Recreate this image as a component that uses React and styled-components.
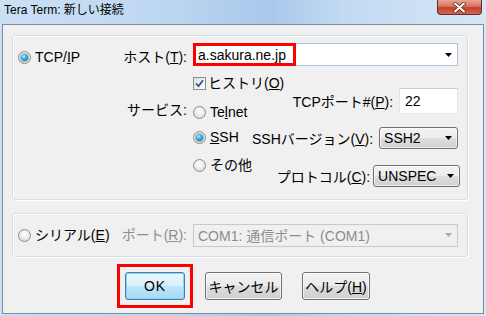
import React from 'react';
import styled, { createGlobalStyle, css } from 'styled-components';

const GlobalStyle = createGlobalStyle`
  html, body { margin: 0; padding: 0; }
  body {
    width: 486px;
    height: 316px;
    overflow: hidden;
    font-family: "Liberation Sans", "Noto Sans CJK JP", sans-serif;
    font-size: 14px;
    color: #000;
  }
`;

const Window = styled.div`
  width: 486px;
  height: 316px;
  box-sizing: border-box;
  display: flex;
  flex-direction: column;
  padding: 0 2px 2px 2px;
  background: linear-gradient(to right, #cbe0f5 0%, #bdd6f0 35%, #a9c8ea 55%, #c3dbf2 72%, #d5e6f7 100%);
`;

const TitleBar = styled.div`
  height: 24px;
  flex: none;
  display: flex;
  justify-content: space-between;
  align-items: flex-start;
  padding-left: 2px;
`;

const TitleText = styled.div`
  font-size: 12px;
  line-height: 20px;
  white-space: nowrap;
`;

const CloseButton = styled.div`
  width: 45px;
  height: 15px;
  margin-right: 2px;
  box-sizing: border-box;
  border: 1px solid #6b2b22;
  border-top: none;
  border-radius: 0 0 4px 4px;
  background: linear-gradient(#e8a596 0%, #d8735f 45%, #c4402c 55%, #d2684f 100%);
  display: grid;
  place-items: center;
`;

const Client = styled.div`
  flex: 1;
  box-sizing: border-box;
  border: 1px solid #7b8ca0;
  background: #f0f0f0;
  padding: 10px 15px 0 9px;
  display: flex;
  flex-direction: column;
`;

const Group = styled.div`
  box-sizing: border-box;
  height: ${(p) => p.$h}px;
  border: 1px solid #d5dfe5;
  border-radius: 3px;
  box-shadow: inset 1px 1px 0 #fff, 1px 1px 0 #fff;
  display: flex;
  align-items: ${(p) => (p.$center ? 'center' : 'flex-start')};
  padding: ${(p) => (p.$center ? '0 0 0 5px' : '7px 0 0 5px')};
  margin-bottom: ${(p) => p.$mb || 0}px;
`;

const LeftCol = styled.div`
  width: 99px;
  flex: none;
  padding-top: ${(p) => p.$pt || 0}px;
`;

const LabelCol = styled.div`
  width: 70px;
  flex: none;
  display: flex;
  flex-direction: column;
  align-items: flex-end;
`;

const Label = styled.div`
  line-height: 16px;
  white-space: nowrap;
  margin-top: ${(p) => p.$mt || 0}px;
  color: ${(p) => (p.$disabled ? '#8d8d8d' : '#000')};
`;

const ControlsCol = styled.div`
  width: 265px;
  flex: none;
  margin-left: 6px;
  display: flex;
  flex-direction: column;
`;

const U = styled.span`
  text-decoration: underline;
`;

const Choice = styled.label`
  display: flex;
  align-items: center;
  gap: ${(p) => p.$gap ?? 4}px;
  height: 16px;
  line-height: 16px;
  white-space: nowrap;
  margin-top: ${(p) => p.$mt || 0}px;
`;

const RadioDot = styled.span`
  width: 13px;
  height: 13px;
  flex: none;
  box-sizing: border-box;
  border-radius: 50%;
  border: 1px solid #8c8c8c;
  background: radial-gradient(circle at 50% 40%, #ffffff 0%, #ececec 50%, #cdcdcd 100%);
  display: grid;
  place-items: center;
  ${(p) =>
    p.$checked &&
    css`
      &::after {
        content: '';
        width: 7px;
        height: 7px;
        border-radius: 50%;
        background: radial-gradient(circle at 40% 35%, #b4f0ff 0%, #2ea8de 45%, #0b5a8c 100%);
        box-shadow: 0 0 0 1px rgba(40, 80, 110, 0.35);
      }
    `}
`;

const CheckBox = styled.span`
  width: 13px;
  height: 13px;
  flex: none;
  box-sizing: border-box;
  border: 1px solid #8e8f8f;
  background: linear-gradient(135deg, #dcdcdc 0%, #f4f4f4 60%, #ffffff 100%);
  display: grid;
  place-items: center;
`;

const Combo = styled.div`
  position: relative;
  width: 265px;
  height: 23px;
  box-sizing: border-box;
  border: 1px solid ${(p) => (p.$disabled ? '#c9c9c9' : '#a8c3de')};
  background: ${(p) => (p.$disabled ? '#f0f0f0' : '#fff')};
  color: ${(p) => (p.$disabled ? '#8d8d8d' : '#000')};
  display: flex;
  align-items: center;
  justify-content: space-between;
  padding: 0 5px 0 4px;
  white-space: nowrap;
`;

const Highlight = styled.span`
  position: absolute;
  left: -1px;
  top: -1px;
  width: 103px;
  height: 23px;
  box-sizing: border-box;
  border: 3px solid #f00;
  pointer-events: none;
`;

const Split = styled.div`
  display: flex;
  align-items: flex-start;
`;

const ServicesCol = styled.div`
  width: 59px;
  flex: none;
  display: flex;
  flex-direction: column;
  margin-top: 9px;
`;

const OptionsCol = styled.div`
  flex: 1;
  display: flex;
  flex-direction: column;
  margin-top: 22px;
`;

const OptionRow = styled.div`
  display: flex;
  align-items: center;
  justify-content: flex-end;
  gap: ${(p) => p.$gap ?? 6}px;
  margin-top: ${(p) => p.$mt || 0}px;
  margin-right: ${(p) => p.$mr || 0}px;
  white-space: nowrap;
`;

const TextBox = styled.div`
  width: 59px;
  height: 26px;
  box-sizing: border-box;
  background: #fff;
  border: 1px solid #e2e5ea;
  border-top-color: #c9ccd3;
  padding: 0 5px;
  line-height: 24px;
`;

const Select = styled.div`
  width: ${(p) => p.$w}px;
  height: 22px;
  box-sizing: border-box;
  border: 1px solid #707070;
  border-radius: 3px;
  background: linear-gradient(#f4f4f4 0%, #ececec 50%, #dedede 51%, #d0d0d0 100%);
  box-shadow: inset 0 0 0 1px rgba(255, 255, 255, 0.6);
  display: flex;
  align-items: center;
  justify-content: space-between;
  padding: 0 5px 0 4px;
`;

const ButtonRow = styled.div`
  display: flex;
  gap: 20px;
  padding-left: 113px;
  margin-top: 15px;
`;

const Button = styled.button`
  position: relative;
  width: ${(p) => p.$w}px;
  height: 28px;
  padding: 0;
  font: inherit;
  font-size: 14px;
  color: #000;
  white-space: nowrap;
  border: 1px solid #707070;
  border-radius: 3px;
  background: linear-gradient(#f3f3f3 0%, #ebebeb 50%, #dddddd 51%, #cfcfcf 100%);
  box-shadow: inset 0 0 0 1px rgba(255, 255, 255, 0.7);
  ${(p) =>
    p.$default &&
    css`
      letter-spacing: 1px;
      border-color: #3c7fb1;
      background: linear-gradient(#eaf6fd 0%, #d9f0fc 50%, #bee6fd 51%, #a7d9f5 100%);
      box-shadow: inset 0 0 0 1px #8fd3f5;
      &::after {
        content: '';
        position: absolute;
        left: -9px;
        top: -9px;
        right: -9px;
        bottom: -9px;
        border: 3px solid #f00;
      }
    `}
`;

const Arrow = ({ color = '#000' }) => (
  <svg width="7" height="4" viewBox="0 0 7 4">
    <polygon points="0,0 7,0 3.5,4" fill={color} />
  </svg>
);

const Radio = ({ checked, children, mt }) => (
  <Choice $mt={mt}>
    <RadioDot $checked={checked} />
    <span>{children}</span>
  </Choice>
);

export default function App() {
  return (
    <>
      <GlobalStyle />
      <Window>
        <TitleBar>
          <TitleText>Tera Term: 新しい接続</TitleText>
          <CloseButton>
            <svg width="13" height="11" viewBox="0 0 13 11">
              <path d="M2 1.5 L11 9.5 M11 1.5 L2 9.5" stroke="#5a2018" strokeWidth="3.4" strokeLinecap="round" />
              <path d="M2 1.5 L11 9.5 M11 1.5 L2 9.5" stroke="#fff" strokeWidth="2" strokeLinecap="round" />
            </svg>
          </CloseButton>
        </TitleBar>

        <Client>
          <Group $h={165} $mb={13}>
            <LeftCol $pt={6}>
              <Radio checked>TCP/<U>I</U>P</Radio>
            </LeftCol>
            <LabelCol>
              <Label $mt={6}>ホスト(<U>T</U>):</Label>
              <Label $mt={37}>サービス:</Label>
            </LabelCol>
            <ControlsCol>
              <Combo>
                <span>a.sakura.ne.jp</span>
                <Arrow />
                <Highlight />
              </Combo>
              <Split>
                <ServicesCol>
                  <Choice $gap={2}>
                    <CheckBox>
                      <svg width="9" height="9" viewBox="0 0 9 9">
                        <path d="M1 4.5 L3.5 7.2 L8 1.2" stroke="#3b4f94" strokeWidth="1.8" fill="none" />
                      </svg>
                    </CheckBox>
                    <span>ヒストリ(<U>O</U>)</span>
                  </Choice>
                  <Radio mt={13}>Te<U>l</U>net</Radio>
                  <Radio checked mt={9}><U>S</U>SH</Radio>
                  <Radio mt={12}>その他</Radio>
                </ServicesCol>
                <OptionsCol>
                  <OptionRow>
                    <span>TCPポート#(<U>P</U>):</span>
                    <TextBox>22</TextBox>
                  </OptionRow>
                  <OptionRow $mt={13}>
                    <span>SSHバージョン(<U>V</U>):</span>
                    <Select $w={79}>
                      <span>SSH2</span>
                      <Arrow />
                    </Select>
                  </OptionRow>
                  <OptionRow $mt={16} $gap={3} $mr={-2}>
                    <span>プロトコル(<U>C</U>):</span>
                    <Select $w={87}>
                      <span>UNSPEC</span>
                      <Arrow />
                    </Select>
                  </OptionRow>
                </OptionsCol>
              </Split>
            </ControlsCol>
          </Group>

          <Group $h={44} $center>
            <LeftCol>
              <Radio>シリアル(<U>E</U>)</Radio>
            </LeftCol>
            <LabelCol>
              <Label $disabled>ポート(<U>R</U>):</Label>
            </LabelCol>
            <ControlsCol>
              <Combo $disabled>
                <span>COM1: 通信ポート (COM1)</span>
                <Arrow color="#a8a8a8" />
              </Combo>
            </ControlsCol>
          </Group>

          <ButtonRow>
            <Button $w={60} $default>OK</Button>
            <Button $w={77}>キャンセル</Button>
            <Button $w={68}>ヘルプ(<U>H</U>)</Button>
          </ButtonRow>
        </Client>
      </Window>
    </>
  );
}
